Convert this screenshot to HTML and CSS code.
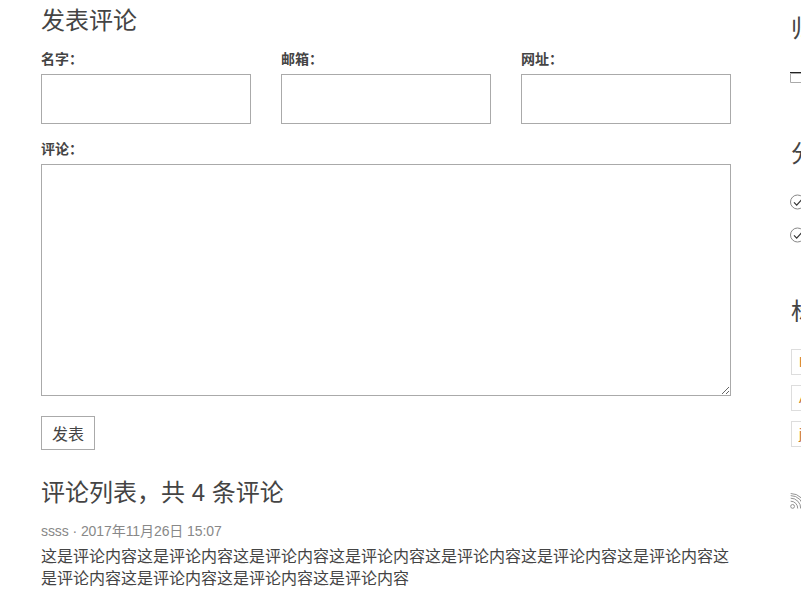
FILE: index.html
```html
<!DOCTYPE html>
<html lang="zh-CN">
<head>
    <meta charset="UTF-8">
    <meta name="viewport" content="width=device-width, initial-scale=1.0">
    <title>发表评论</title>
    <link rel="stylesheet" href="styles.css">
</head>
<body>
    <div class="page">
        <main class="main">
            <h3 class="title">发表评论</h3>
            <form class="comment-form">
                <div class="fields">
                    <div class="field">
                        <label>名字：</label>
                        <input type="text">
                    </div>
                    <div class="field">
                        <label>邮箱：</label>
                        <input type="text">
                    </div>
                    <div class="field">
                        <label>网址：</label>
                        <input type="text">
                    </div>
                </div>
                <div class="field">
                    <label>评论：</label>
                    <textarea></textarea>
                </div>
                <button type="button" class="btn">发表</button>
            </form>

            <h3 class="title list-title">评论列表，共 4 条评论</h3>
            <div class="comment">
                <div class="meta">ssss · 2017年11月26日 15:07</div>
                <p class="content">这是评论内容这是评论内容这是评论内容这是评论内容这是评论内容这是评论内容这是评论内容这是评论内容这是评论内容这是评论内容这是评论内容</p>
            </div>
        </main>

        <aside class="sidebar">
            <section class="widget archive">
                <h3 class="widget-title">归档</h3>
                <ul class="list">
                    <li>
                        <svg class="icon" viewBox="0 0 16 16"><path d="M.5 4.5h15v9H.5z" fill="none" stroke="#aaa"/><path d="M0 3.5h16" stroke="#222"/></svg>
                        <span>2017年11月</span>
                    </li>
                </ul>
            </section>
            <section class="widget category">
                <h3 class="widget-title">分类</h3>
                <ul class="list">
                    <li>
                        <svg class="icon" viewBox="0 0 16 16"><circle cx="7.5" cy="8" r="7" fill="none" stroke="#888"/><path d="M4 8.4l2.7 2.7 5-5.4" fill="none" stroke="#333" stroke-width="1.2"/></svg>
                        <span>前端开发</span>
                    </li>
                    <li>
                        <svg class="icon" viewBox="0 0 16 16"><circle cx="7.5" cy="8" r="7" fill="none" stroke="#888"/><path d="M4 8.4l2.7 2.7 5-5.4" fill="none" stroke="#333" stroke-width="1.2"/></svg>
                        <span>后端开发</span>
                    </li>
                </ul>
            </section>
            <section class="widget tags">
                <h3 class="widget-title">标签</h3>
                <a class="tag">HTML</a>
                <a class="tag">Ajax</a>
                <a class="tag">javascript</a>
            </section>
            <a class="rss">
                <svg class="icon" viewBox="0 0 16 16" fill="none" stroke="#888" stroke-width=".9">
                    <circle cx="2.6" cy="13.4" r="1.9"/>
                    <path d="M.7 8.2a7 7 0 0 1 7 7.3M.7 5.2a10 10 0 0 1 10 10.3M.7 2.6a12.7 12.7 0 0 1 12.7 12.9M.7.5a14.8 14.8 0 0 1 14.8 15"/>
                </svg>
                <span>RSS</span>
            </a>
        </aside>
    </div>
</body>
</html>
```

FILE: styles.css
```css
html, body {
    margin: 0;
    height: 611px;
    overflow: hidden;
}
body {
    font-family: "Liberation Sans", "Noto Sans CJK SC", sans-serif;
    background-color: #fff;
    color: #444;
    font-size: 16px;
}
.page {
    display: flex;
    gap: 59px;
    padding-left: 41px;
    width: 1100px;
}
.main {
    width: 690px;
    flex-shrink: 0;
    padding-top: 4px;
}
.title {
    margin: 0;
    font-size: 24px;
    font-weight: normal;
    line-height: 33px;
}
.fields {
    display: flex;
    gap: 30px;
    margin-top: 12px;
}
.fields .field {
    width: 210px;
}
.field label {
    display: block;
    font-size: 14px;
    font-weight: bold;
    line-height: 20px;
    margin-bottom: 5px;
}
.field input {
    display: block;
    box-sizing: border-box;
    width: 100%;
    height: 50px;
    border: 1px solid #aaa;
    border-radius: 0;
    padding: 0 10px;
    background: #fff;
}
.field textarea {
    display: block;
    box-sizing: border-box;
    width: 100%;
    height: 232px;
    border: 1px solid #aaa;
    border-radius: 0;
    padding: 10px;
    margin: 0;
    background: #fff;
}
.fields + .field {
    margin-top: 15px;
}
.btn {
    display: block;
    margin-top: 20px;
    width: 54px;
    height: 34px;
    padding: 0;
    border: 1px solid #aaa;
    background: #fff;
    color: #444;
    font-family: inherit;
    font-size: 16px;
}
.list-title {
    margin-top: 26px;
}
.comment {
    margin-top: 12px;
}
.meta {
    font-size: 14px;
    line-height: 20px;
    color: #888;
    letter-spacing: -0.08px;
}
.content {
    margin: 5px 0 0;
    font-size: 16px;
    line-height: 22px;
}
.sidebar {
    width: 260px;
    flex-shrink: 0;
    padding-top: 12px;
}
.widget {
    margin-bottom: 44px;
}
.widget-title {
    margin: 0 0 0 1px;
    font-size: 24px;
    font-weight: normal;
    line-height: 33px;
}
.list {
    list-style: none;
    margin: 15px 0 0;
    padding: 0;
}
.list li {
    display: flex;
    align-items: center;
    gap: 8px;
    height: 33px;
    font-size: 14px;
}
.icon {
    width: 16px;
    height: 16px;
    flex-shrink: 0;
}
.tag {
    display: block;
    box-sizing: border-box;
    width: fit-content;
    height: 26px;
    line-height: 24px;
    margin: 10px 0 0 1px;
    padding: 0 7px;
    border: 1px solid #ddd;
    color: #c87a2c;
    font-size: 14px;
}
.widget-title + .tag {
    margin-top: 21px;
}
.tags {
    margin-bottom: 46px;
}
.rss {
    display: flex;
    align-items: center;
    gap: 8px;
    font-size: 14px;
}
```
